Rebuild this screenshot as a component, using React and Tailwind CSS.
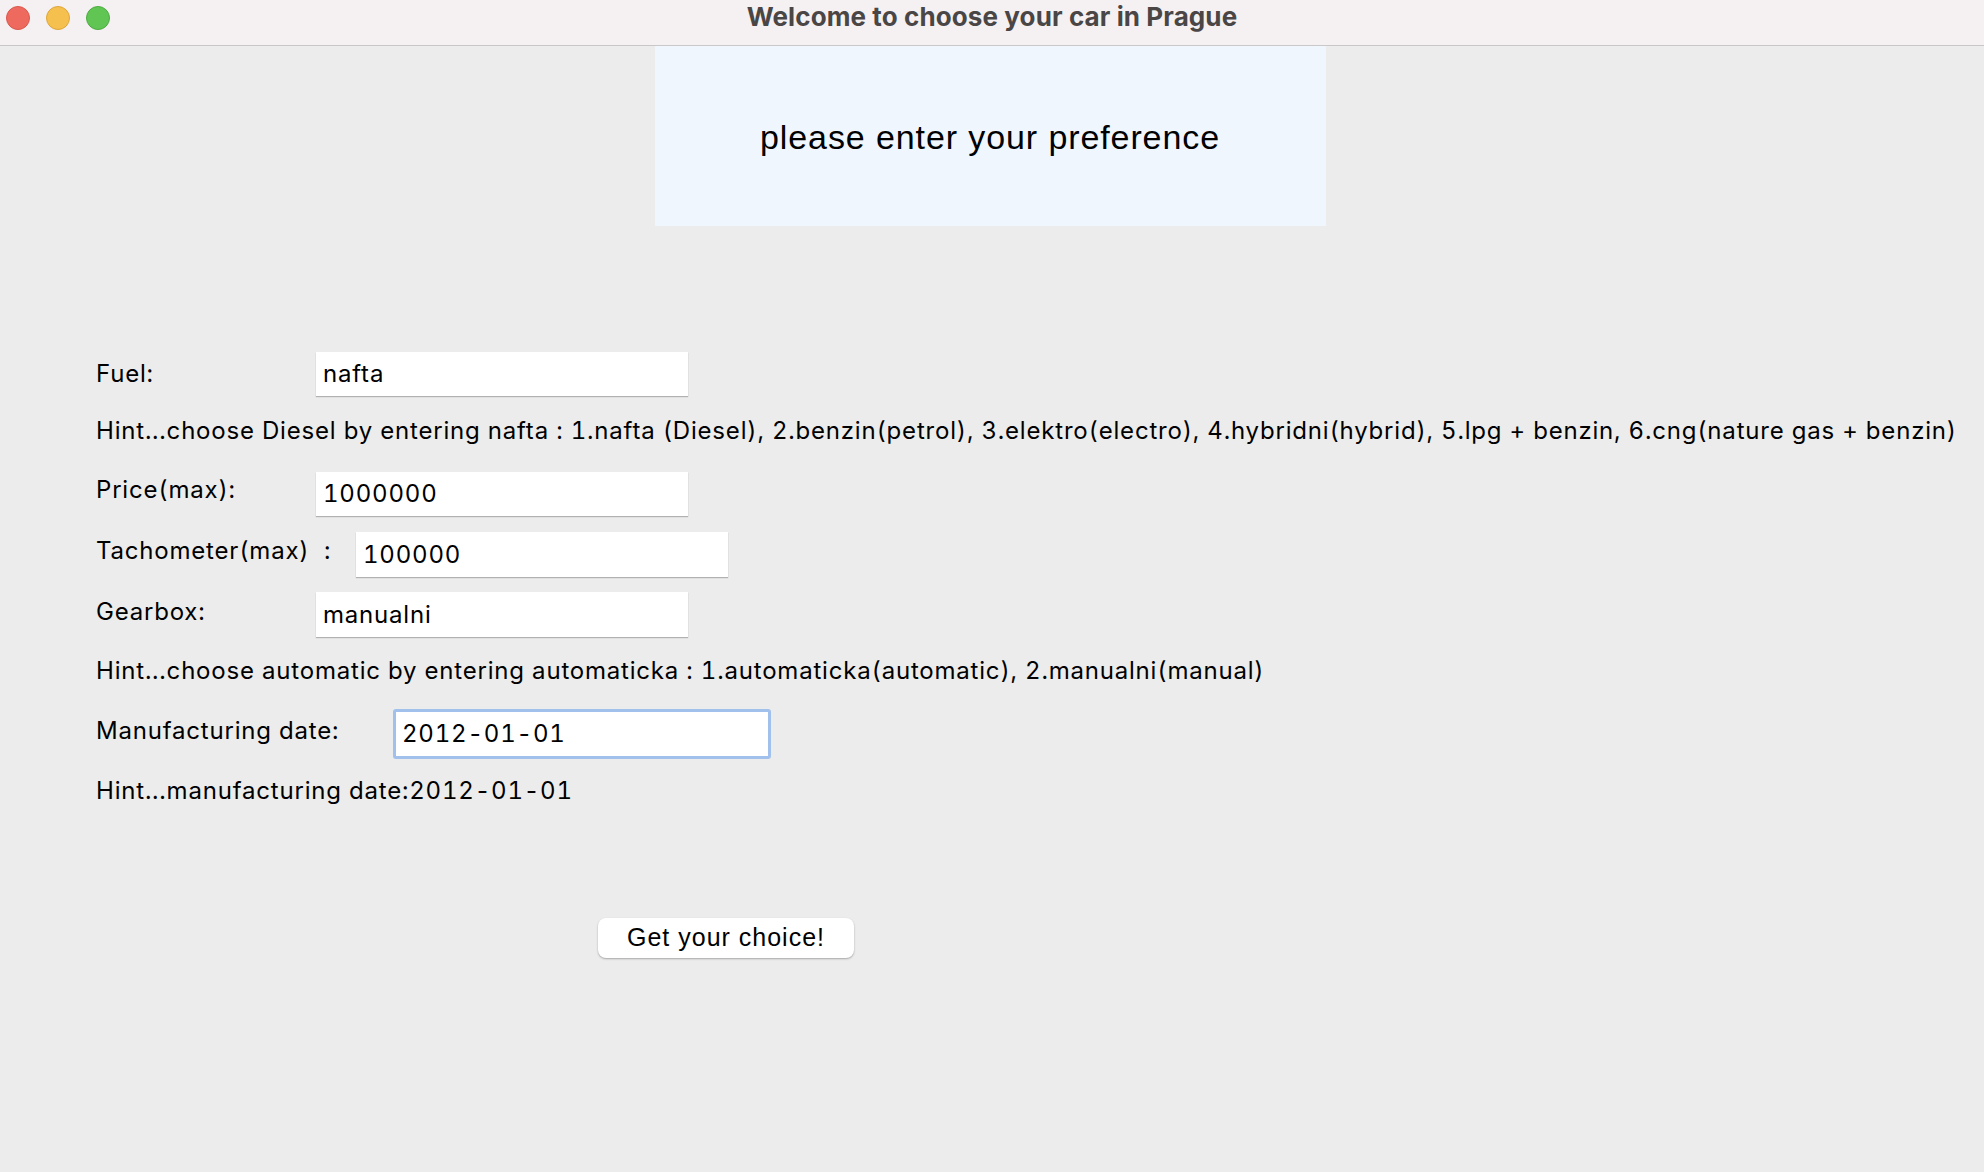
import React from "react";

/**
 * Car chooser form (Prague).
 * Desktop-window look: title bar, heading panel, preference fields with hints.
 */
function Field({ value, className = "" }) {
  return (
    <div
      className={`h-[44px] bg-white flex items-center px-[7px] shadow-[0_1px_1px_rgba(0,0,0,0.25)] text-black ${className}`}
    >
      {value}
    </div>
  );
}

export default function App() {
  return (
    <div
      className="w-full min-h-screen h-[1172px] flex flex-col bg-[#ececec] overflow-hidden"
      style={{ fontFamily: 'Inter, "Liberation Sans", Arial, sans-serif' }}
    >
      {/* Title bar */}
      <div className="relative h-[46px] shrink-0 bg-[#f5f1f2] border-b border-[#c9c7c8] flex items-start justify-center">
        <div className="absolute left-[6px] top-[6px] flex gap-[16px]">
          <span className="w-[24px] h-[24px] rounded-full bg-[#ef6a5e] border border-[#d9584d]" />
          <span className="w-[24px] h-[24px] rounded-full bg-[#f6c04f] border border-[#dea63a]" />
          <span className="w-[24px] h-[24px] rounded-full bg-[#61c554] border border-[#4eab42]" />
        </div>
        <h1 className="mt-[1px] text-[26px] leading-[32px] font-bold text-[#4a4646] tracking-[0.1px]">
          Welcome to choose your car in Prague
        </h1>
      </div>

      {/* Heading panel */}
      <div className="flex justify-center">
        <div className="w-[671px] h-[180px] ml-[-4px] bg-[#f0f6fe] flex items-center justify-center pt-[2px]">
          <p
            className="text-[34px] text-black tracking-[0.9px]"
            style={{ fontFamily: '"Liberation Sans", Arial, sans-serif' }}
          >
            please enter your preference
          </p>
        </div>
      </div>

      {/* Form */}
      <div className="flex flex-col pl-[96px] text-[24px] text-black tracking-[0.8px] tabular-nums">
        <div className="flex items-center mt-[126px]">
          <span className="w-[220px]">Fuel:</span>
          <Field value="nafta" className="w-[372px]" />
        </div>

        <p className="mt-[21px] h-[28px] leading-[28px] whitespace-nowrap">
          Hint...choose Diesel by entering nafta : 1.nafta (Diesel), 2.benzin(petrol), 3.elektro(electro), 4.hybridni(hybrid), 5.lpg + benzin, 6.cng(nature gas + benzin)
        </p>

        <div className="flex items-center mt-[27px]">
          <span className="w-[220px] -mt-[8px]">Price(max):</span>
          <Field value="1000000" className="w-[372px]" />
        </div>

        <div className="flex items-center mt-[16px]">
          <span className="w-[260px] -mt-[8px]">Tachometer(max)&nbsp;&nbsp;:</span>
          <Field value="100000" className="w-[372px] h-[45px]" />
        </div>

        <div className="flex items-center mt-[15px]">
          <span className="w-[220px] -mt-[6px]">Gearbox:</span>
          <Field value="manualni" className="w-[372px] h-[45px]" />
        </div>

        <p className="mt-[20px] h-[28px] leading-[28px] whitespace-nowrap">
          Hint...choose automatic by entering automaticka : 1.automaticka(automatic), 2.manualni(manual)
        </p>

        <div className="flex items-center mt-[24px]">
          <span className="w-[297px] -mt-[6px]">Manufacturing date:</span>
          <div className="w-[378px] h-[50px] rounded-[3px] border-[3px] border-[#a2c0ec] bg-white flex items-center px-[6px]">
            2012-01-01
          </div>
        </div>

        <p className="mt-[18px] h-[28px] leading-[28px] whitespace-nowrap">
          Hint...manufacturing date:2012-01-01
        </p>

        <div className="mt-[113px] pl-[502px]">
          <button
            type="button"
            className="w-[256px] h-[40px] rounded-[8px] bg-white text-[25px] text-black tracking-[1px] shadow-[0_1px_2px_rgba(0,0,0,0.3)]"
            style={{ fontFamily: '"Liberation Sans", Arial, sans-serif' }}
          >
            Get your choice!
          </button>
        </div>
      </div>
    </div>
  );
}
